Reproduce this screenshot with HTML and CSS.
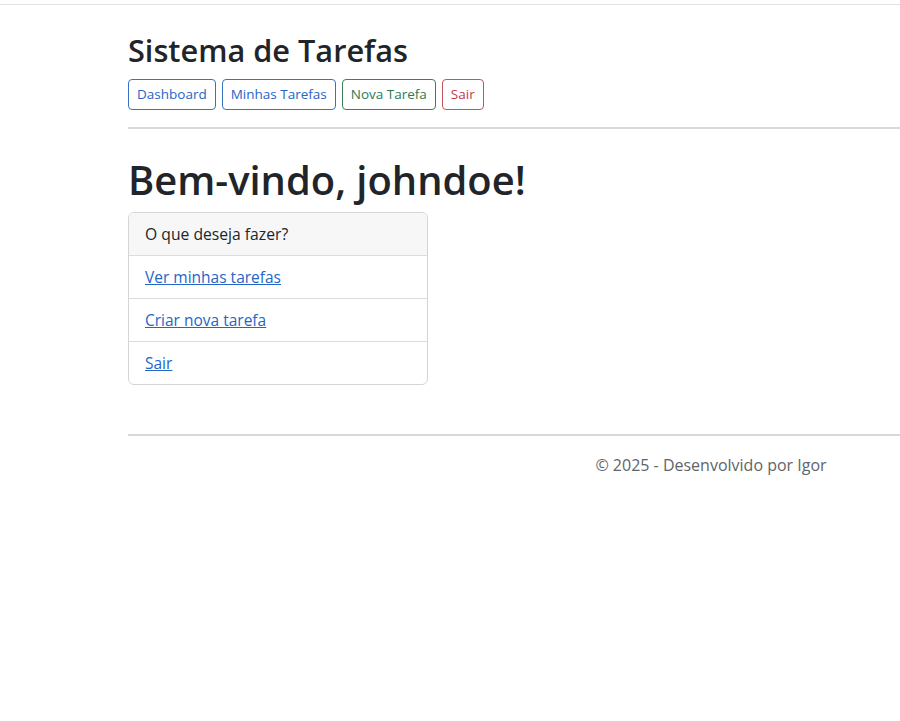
FILE: index.html
```html
<!DOCTYPE html>
<html lang="pt-br">
<head>
<meta charset="utf-8">
<title>Sistema de Tarefas</title>
<link rel="stylesheet" href="styles.css">
</head>
<body>
<div class="topbar"></div>
<div class="container">
  <header class="site-header">
    <h2 class="brand">Sistema de Tarefas</h2>
    <nav class="nav">
      <a class="btn btn-primary" href="#">Dashboard</a>
      <a class="btn btn-primary" href="#">Minhas Tarefas</a>
      <a class="btn btn-success" href="#">Nova Tarefa</a>
      <a class="btn btn-danger" href="#">Sair</a>
    </nav>
  </header>
  <hr class="divider">
  <main>
    <h1 class="welcome">Bem-vindo, johndoe!</h1>
    <div class="card">
      <div class="card-header">O que deseja fazer?</div>
      <ul class="list">
        <li class="list-item"><a href="#">Ver minhas tarefas</a></li>
        <li class="list-item"><a href="#">Criar nova tarefa</a></li>
        <li class="list-item"><a href="#">Sair</a></li>
      </ul>
    </div>
  </main>
  <hr class="divider footer-divider">
  <footer class="footer">© 2025 - Desenvolvido por Igor</footer>
</div>
</body>
</html>
```
FILE: styles.css
```css
body {
  margin: 0;
  font-family: "Open Sans", "Noto Sans", sans-serif;
  color: #212529;
  background: #fff;
  font-size: 16px;
  line-height: 1.5;
}
.topbar {
  height: 4px;
  border-bottom: 1px solid #e2e2e2;
}
.container {
  margin-left: 128px;
}
.site-header {
  padding-top: 26px;
}
.brand {
  margin: 0;
  font-size: 30.7px;
  font-weight: 600;
  line-height: 38px;
}
.nav {
  display: flex;
  gap: 6px;
  margin-top: 10px;
}
.btn {
  display: inline-block;
  font-size: 13.5px;
  line-height: 21px;
  padding: 4px 8px;
  border: 1px solid;
  border-radius: 4px;
  text-decoration: none;
  background: #fff;
}
.btn-primary { color: #2466c6; border-color: #3a72c2; }
.btn-success { color: #2d7a54; border-color: #3d7e5c; }
.btn-danger { color: #c23a47; border-color: #c9525d; }
.divider {
  margin: 17px 0 0;
  border: 0;
  border-top: 2px solid #d9d9d9;
}
.welcome {
  margin: 26px 0 8px;
  font-size: 39.9px;
  font-weight: 600;
  line-height: 49px;
}
.card {
  width: 298px;
  border: 1px solid #d5d5d5;
  border-radius: 6px;
  overflow: hidden;
}
.card-header {
  background: #f7f7f7;
  padding: 8px 16px;
  line-height: 26px;
  font-size: 15.7px;
}
.list {
  list-style: none;
  margin: 0;
  padding: 0;
}
.list-item {
  border-top: 1px solid #dcdcdc;
  padding: 8px 16px;
  line-height: 26px;
  font-size: 15.5px;
}
.list-item a {
  color: #2466c6;
}
.footer-divider {
  margin-top: 49px;
}
.footer {
  padding: 17px 0 0 394px;
  text-align: center;
  color: #5f6469;
  font-size: 16px;
  line-height: 24px;
}
```
